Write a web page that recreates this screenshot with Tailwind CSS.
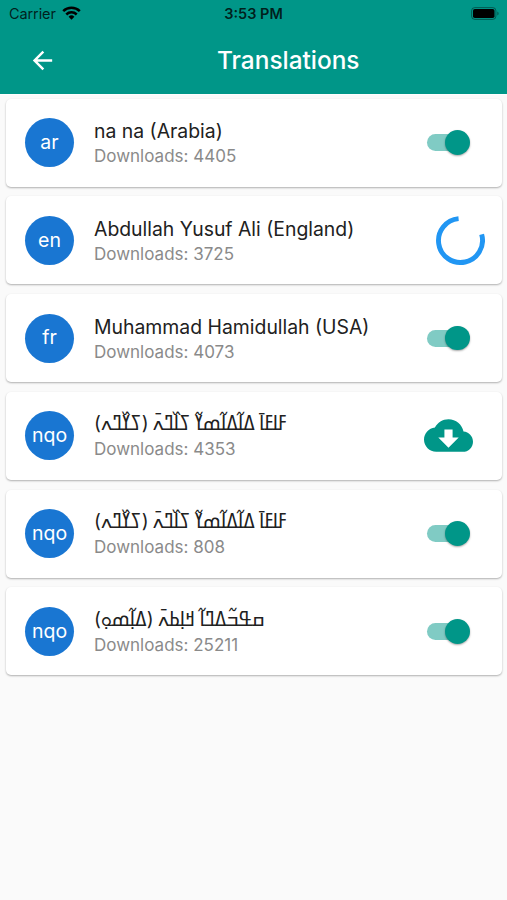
<!DOCTYPE html>
<html lang="en">
<head>
    <meta charset="UTF-8">
    <meta name="viewport" content="width=device-width, initial-scale=1.0">
    <title>Translations</title>
    <script src="https://cdn.jsdelivr.net/npm/@tailwindcss/browser@4"></script>
</head>
<body class="bg-[#fafafa] min-h-screen overflow-hidden font-['Inter','DejaVu_Sans',sans-serif]">
    <header class="h-[93.5px] bg-[#009688] shadow-[0_1px_1px_rgba(255,255,255,0.8)]">
        <!-- Status bar -->
        <div class="grid grid-cols-3 items-center h-[27px] pl-[9px] pr-[7px] text-black/80">
            <div class="flex items-center gap-[6px]">
                <span class="text-[14.5px] tracking-[-0.1px]">Carrier</span>
                <svg class="w-[19px] h-[14px] -mt-px" viewBox="0 0 19 14" fill="none" stroke="#000" stroke-width="2.5">
                    <path d="M1.2 5.2a11.8 11.8 0 0 1 16.6 0"/>
                    <path d="M4.3 8.5a7.4 7.4 0 0 1 10.4 0"/>
                    <path fill="#000" stroke="none" d="M9.5 13.8l-2.9-3a4.1 4.1 0 0 1 5.8 0z"/>
                </svg>
            </div>
            <span class="text-center text-[14.5px] font-semibold whitespace-nowrap -ml-[2px]">3:53 PM</span>
            <svg class="justify-self-end w-[29px] h-[13px]" viewBox="0 0 29 13">
                <rect x=".6" y=".6" width="24.3" height="11.8" rx="3.2" fill="none" stroke="#000" stroke-opacity=".4"/>
                <rect x="2" y="2" width="21.5" height="9" rx="1.8"/>
                <path d="M26.3 4.5c1.8.6 1.8 3.4 0 4z" fill-opacity=".4"/>
            </svg>
        </div>
        <!-- App bar -->
        <div class="flex items-center h-[66px] pl-[28px] text-white">
            <svg class="w-[29px] h-[29px]" viewBox="0 0 24 24" fill="currentColor">
                <path d="M20 11H7.83l5.59-5.59L12 4l-8 8 8 8 1.41-1.41L7.83 13H20v-2z"/>
            </svg>
            <h1 class="ml-[160px] text-[24.4px] leading-[30px] font-medium">Translations</h1>
        </div>
    </header>

    <main class="flex flex-col gap-[9.75px] pt-[5px] pl-[6px] pr-[5px]">
        <div class="flex items-center h-[88px] pl-[19px] pr-[17px] bg-white rounded-[5px] shadow-[0_1px_2px_rgba(0,0,0,0.3)]">
            <div class="flex items-center justify-center w-[49px] h-[49px] rounded-full bg-[#1976d2] text-white text-[19.5px]">ar</div>
            <div class="flex-1 ml-[20px]">
                <p class="text-[19.4px] leading-[26px] text-[#212121]">na na (Arabia)</p>
                <p class="text-[17px] leading-[24px] text-[#8a8a8a]">Downloads: 4405</p>
            </div>
            <div class="flex justify-center w-[73px]">
                <div class="flex items-center justify-end w-[44px] h-[25px]">
                    <div class="flex items-center justify-end w-[40px] h-[17px] mr-[5px] rounded-full bg-[#80cbc4]">
                        <div class="shrink-0 w-[24.5px] h-[24.5px] mr-[-4px] rounded-full bg-[#009688] shadow-[0_1px_2px_rgba(0,0,0,0.35)]"></div>
                    </div>
                </div>
            </div>
        </div>

        <div class="flex items-center h-[88px] pl-[19px] pr-[17px] bg-white rounded-[5px] shadow-[0_1px_2px_rgba(0,0,0,0.3)]">
            <div class="flex items-center justify-center w-[49px] h-[49px] rounded-full bg-[#1976d2] text-white text-[19.5px]">en</div>
            <div class="flex-1 ml-[20px] pt-px">
                <p class="text-[19.4px] leading-[26px] text-[#212121]">Abdullah Yusuf Ali (England)</p>
                <p class="text-[17px] leading-[24px] text-[#8a8a8a]">Downloads: 3725</p>
            </div>
            <div class="flex justify-end w-[73px]">
                <svg class="w-[49px] h-[49px]" viewBox="0 0 49 49" fill="none" stroke="#2196f3" stroke-width="4.9">
                    <path d="M45.65 18.44A22 22 0 1 1 22.58 2.58"/>
                </svg>
            </div>
        </div>

        <div class="flex items-center h-[88px] pl-[19px] pr-[17px] bg-white rounded-[5px] shadow-[0_1px_2px_rgba(0,0,0,0.3)]">
            <div class="flex items-center justify-center w-[49px] h-[49px] rounded-full bg-[#1976d2] text-white text-[19.5px]">fr</div>
            <div class="flex-1 ml-[20px] pt-px">
                <p class="text-[19.4px] leading-[26px] text-[#212121]">Muhammad Hamidullah (USA)</p>
                <p class="text-[17px] leading-[24px] text-[#8a8a8a]">Downloads: 4073</p>
            </div>
            <div class="flex justify-center w-[73px]">
                <div class="flex items-center justify-end w-[44px] h-[25px]">
                    <div class="flex items-center justify-end w-[40px] h-[17px] mr-[5px] rounded-full bg-[#80cbc4]">
                        <div class="shrink-0 w-[24.5px] h-[24.5px] mr-[-4px] rounded-full bg-[#009688] shadow-[0_1px_2px_rgba(0,0,0,0.35)]"></div>
                    </div>
                </div>
            </div>
        </div>

        <div class="flex items-center h-[88px] pl-[19px] pr-[17px] bg-white rounded-[5px] shadow-[0_1px_2px_rgba(0,0,0,0.3)]">
            <div class="flex items-center justify-center w-[49px] h-[49px] rounded-full bg-[#1976d2] text-white text-[19.5px]">nqo</div>
            <div class="flex-1 ml-[20px] pt-px">
                <p class="text-[18.9px] leading-[26px] [word-spacing:-1.2px] text-[#212121]"><bdi lang="nqo" dir="rtl">ߓߊߓߊ߫ ߡߊ߬ߡߊ߬ߘߌ߬ ߖߊ߰ߣߍ߫ (ߖߌ߰ߣߍ)</bdi></p>
                <p class="text-[17px] leading-[24px] text-[#8a8a8a]">Downloads: 4353</p>
            </div>
            <div class="flex justify-center w-[73px]">
                <svg class="w-[49px] h-[49px]" viewBox="0 0 24 24" fill="#009688">
                    <path d="M19.35 10.04C18.67 6.59 15.64 4 12 4 9.11 4 6.6 5.64 5.35 8.04 2.34 8.36 0 10.91 0 14c0 3.31 2.69 6 6 6h13c2.76 0 5-2.24 5-5 0-2.64-2.05-4.78-4.65-4.96zM17 13l-5 5-5-5h3V9h4v4h3z"/>
                </svg>
            </div>
        </div>

        <div class="flex items-center h-[88px] pl-[19px] pr-[17px] bg-white rounded-[5px] shadow-[0_1px_2px_rgba(0,0,0,0.3)]">
            <div class="flex items-center justify-center w-[49px] h-[49px] rounded-full bg-[#1976d2] text-white text-[19.5px]">nqo</div>
            <div class="flex-1 ml-[20px] pt-px">
                <p class="text-[18.9px] leading-[26px] [word-spacing:-1.2px] text-[#212121]"><bdi lang="nqo" dir="rtl">ߓߊߓߊ߫ ߡߊ߬ߡߊ߬ߘߌ߬ ߖߊ߰ߣߍ߫ (ߖߌ߰ߣߍ)</bdi></p>
                <p class="text-[17px] leading-[24px] text-[#8a8a8a]">Downloads: 808</p>
            </div>
            <div class="flex justify-center w-[73px]">
                <div class="flex items-center justify-end w-[44px] h-[25px]">
                    <div class="flex items-center justify-end w-[40px] h-[17px] mr-[5px] rounded-full bg-[#80cbc4]">
                        <div class="shrink-0 w-[24.5px] h-[24.5px] mr-[-4px] rounded-full bg-[#009688] shadow-[0_1px_2px_rgba(0,0,0,0.35)]"></div>
                    </div>
                </div>
            </div>
        </div>

        <div class="flex items-center h-[88px] pl-[19px] pr-[17px] bg-white rounded-[5px] shadow-[0_1px_2px_rgba(0,0,0,0.3)]">
            <div class="flex items-center justify-center w-[49px] h-[49px] rounded-full bg-[#1976d2] text-white text-[19.5px]">nqo</div>
            <div class="flex-1 ml-[20px] pt-px">
                <p class="text-[18.9px] leading-[26px] [word-spacing:-1px] text-[#212121]"><bdi lang="nqo" dir="rtl">ߛߟߏ߬ߡߣߊ߬ ߞߊ߲ߕߍ߫ (ߡߊ߲߬ߘߋ߲)</bdi></p>
                <p class="text-[17px] leading-[24px] text-[#8a8a8a]">Downloads: 25211</p>
            </div>
            <div class="flex justify-center w-[73px]">
                <div class="flex items-center justify-end w-[44px] h-[25px]">
                    <div class="flex items-center justify-end w-[40px] h-[17px] mr-[5px] rounded-full bg-[#80cbc4]">
                        <div class="shrink-0 w-[24.5px] h-[24.5px] mr-[-4px] rounded-full bg-[#009688] shadow-[0_1px_2px_rgba(0,0,0,0.35)]"></div>
                    </div>
                </div>
            </div>
        </div>
    </main>
</body>
</html>
